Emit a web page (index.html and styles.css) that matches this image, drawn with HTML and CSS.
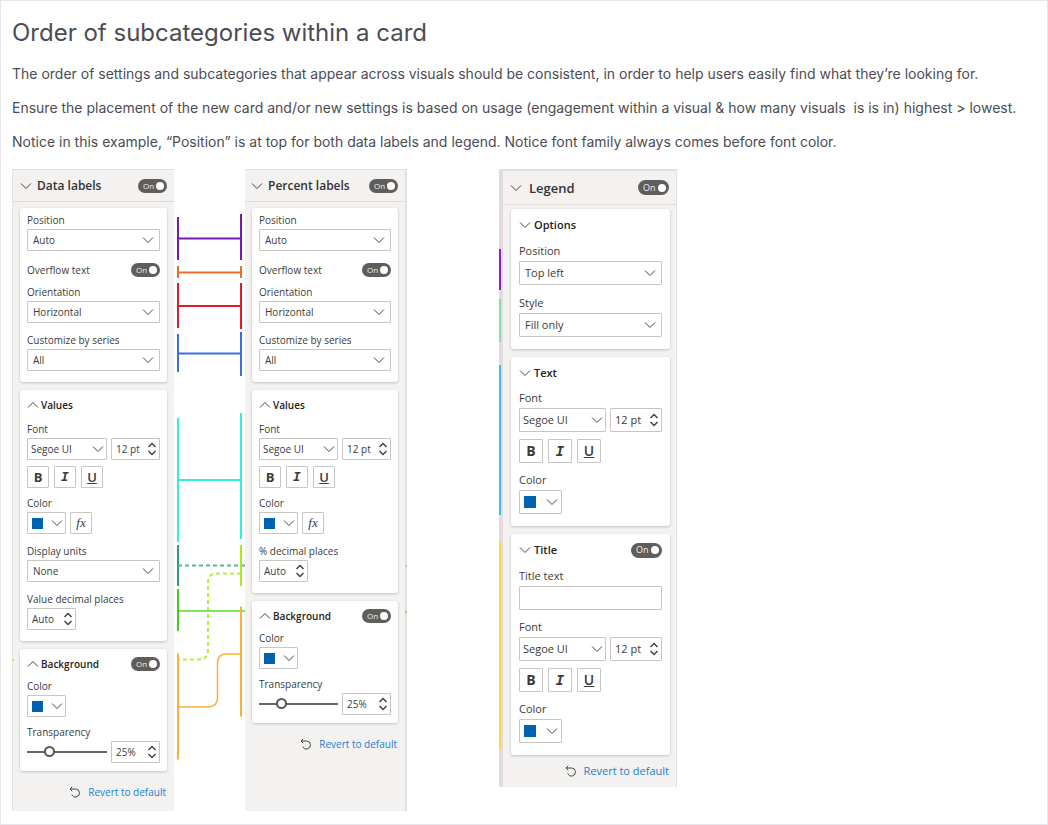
FILE: index.html
```
<!DOCTYPE html>
<html lang="en">
<head>
    <meta charset="UTF-8">
    <meta name="viewport" content="width=device-width, initial-scale=1.0">
    <title>Order of subcategories within a card</title>
    <link rel="stylesheet" href="styles.css">
</head>
<body>
    <!-- shared icons -->
    <svg class="icon-defs" width="0" height="0" aria-hidden="true">
        <symbol id="down" viewBox="0 0 12 12"><path d="M1 3.5 6 8.5 11 3.5" /></symbol>
        <symbol id="up" viewBox="0 0 12 12"><path d="M1 8.5 6 3.5 11 8.5" /></symbol>
        <symbol id="updown" viewBox="0 0 10 14"><path d="M1.5 5 5 1.5 8.5 5M1.5 9 5 12.5 8.5 9" /></symbol>
        <symbol id="revert" viewBox="0 0 12 12"><path d="M3.2.8 1 3l2.2 2.2M1 3h5.5a4 4 0 1 1-3.7 5.5" /></symbol>
    </svg>

    <main class="page">
        <h1>Order of subcategories within a card</h1>
        <p>The order of settings and subcategories that appear across visuals should be consistent, in order to help users easily find what they’re looking for.</p>
        <p>Ensure the placement of the new card and/or new settings is based on usage (engagement within a visual &amp; how many visuals&nbsp; is is in) highest &gt; lowest.</p>
        <p>Notice in this example, “Position” is at top for both data labels and legend. Notice font family always comes before font color.</p>

        <div class="panes">
            <!-- Data labels -->
            <section class="pane pane-data">
                <header class="pane-header">
                    <svg class="chevron"><use href="#down" /></svg>
                    <h2>Data labels</h2>
                    <label class="toggle">On<input type="checkbox" aria-label="Data labels" checked></label>
                </header>
                <div class="pane-body">
                    <div class="card">
                        <div class="field">
                            <label for="d-position">Position</label>
                            <select id="d-position"><option>Auto</option></select>
                        </div>
                        <div class="row spaced">
                            <span class="label">Overflow text</span>
                            <label class="toggle">On<input type="checkbox" aria-label="Overflow text" checked></label>
                        </div>
                        <div class="field tight">
                            <label for="d-orientation">Orientation</label>
                            <select id="d-orientation"><option>Horizontal</option></select>
                        </div>
                        <div class="field">
                            <label for="d-series">Customize by series</label>
                            <select id="d-series"><option>All</option></select>
                        </div>
                    </div>
                    <div class="card titled">
                        <div class="row">
                            <svg class="chevron"><use href="#up" /></svg>
                            <h3>Values</h3>
                        </div>
                        <div class="field">
                            <label for="d-font">Font</label>
                            <div class="controls">
                                <select id="d-font" class="font"><option>Segoe UI</option></select>
                                <div class="spinner"><input type="text" value="12 pt" aria-label="Font size"><svg><use href="#updown" /></svg></div>
                            </div>
                        </div>
                        <div class="format">
                            <button type="button"><b>B</b></button>
                            <button type="button"><i>I</i></button>
                            <button type="button"><u>U</u></button>
                        </div>
                        <div class="field tight">
                            <span class="label">Color</span>
                            <div class="controls">
                                <button type="button" class="color" aria-label="Color"><span class="swatch"></span><svg class="chevron"><use href="#down" /></svg></button>
                                <button type="button" class="fx">fx</button>
                            </div>
                        </div>
                        <div class="field">
                            <label for="d-units">Display units</label>
                            <select id="d-units"><option>None</option></select>
                        </div>
                        <div class="field">
                            <label for="d-decimals">Value decimal places</label>
                            <div class="spinner"><input type="text" id="d-decimals" value="Auto"><svg><use href="#updown" /></svg></div>
                        </div>
                    </div>
                    <div class="card titled short">
                        <div class="row">
                            <svg class="chevron"><use href="#up" /></svg>
                            <h3>Background</h3>
                            <label class="toggle">On<input type="checkbox" aria-label="Background" checked></label>
                        </div>
                        <div class="field tight">
                            <span class="label">Color</span>
                            <button type="button" class="color" aria-label="Background color"><span class="swatch"></span><svg class="chevron"><use href="#down" /></svg></button>
                        </div>
                        <div class="field tight">
                            <label for="d-transparency">Transparency</label>
                            <div class="controls">
                                <input type="range" id="d-transparency" value="25">
                                <div class="spinner"><input type="text" value="25%" aria-label="Transparency percent"><svg><use href="#updown" /></svg></div>
                            </div>
                        </div>
                    </div>
                </div>
                <a class="revert" href="#"><svg><use href="#revert" /></svg>Revert to default</a>
                <span class="mark mark-lime"></span>
            </section>

            <!-- lines between matching settings -->
            <svg class="links" width="71" height="642" viewBox="0 0 71 642" aria-hidden="true">
                <path stroke="#7719aa" d="M4 48v43M67 45v46M4 69.5h63" />
                <path stroke="#e8702a" d="M4 97v12M67 97v12M4 103.5h63" />
                <path stroke="#e01b24" d="M4 114v45M67 114v46M4 137h63" />
                <path stroke="#3b6fe0" d="M4 165v38M67 163v44M4 184.5h63" />
                <path stroke="#2ff0dc" d="M4 249v124M67 244v126M4 311h63" />
                <path stroke="#2f9e74" d="M4 376v41" />
                <path stroke="#5bb59a" stroke-dasharray="4 3" d="M4 396.5h67" />
                <path stroke="#b8ee3a" stroke-dasharray="4 3" d="M67 404.5H43q-9 0-9 9V481q0 9.5-9 9.5H4" />
                <path stroke="#aeea1c" d="M67 376v41" />
                <path stroke="#7be35c" d="M4 442h67" />
                <path stroke="#3fce1f" d="M4 420v42" />
                <path stroke="#fbb03b" d="M4 484.5v106M67 437.5v110" />
                <path stroke="#fbb03b" stroke-width="1.5" d="M4 538h30q9.5 0 9.5-9.5V494q0-9 9-9H67" />
            </svg>

            <!-- Percent labels -->
            <section class="pane pane-percent">
                <header class="pane-header">
                    <svg class="chevron"><use href="#down" /></svg>
                    <h2>Percent labels</h2>
                    <label class="toggle">On<input type="checkbox" aria-label="Percent labels" checked></label>
                </header>
                <div class="pane-body">
                    <div class="card">
                        <div class="field">
                            <label for="p-position">Position</label>
                            <select id="p-position"><option>Auto</option></select>
                        </div>
                        <div class="row spaced">
                            <span class="label">Overflow text</span>
                            <label class="toggle">On<input type="checkbox" aria-label="Overflow text" checked></label>
                        </div>
                        <div class="field tight">
                            <label for="p-orientation">Orientation</label>
                            <select id="p-orientation"><option>Horizontal</option></select>
                        </div>
                        <div class="field">
                            <label for="p-series">Customize by series</label>
                            <select id="p-series"><option>All</option></select>
                        </div>
                    </div>
                    <div class="card titled">
                        <div class="row">
                            <svg class="chevron"><use href="#up" /></svg>
                            <h3>Values</h3>
                        </div>
                        <div class="field">
                            <label for="p-font">Font</label>
                            <div class="controls">
                                <select id="p-font" class="font"><option>Segoe UI</option></select>
                                <div class="spinner"><input type="text" value="12 pt" aria-label="Font size"><svg><use href="#updown" /></svg></div>
                            </div>
                        </div>
                        <div class="format">
                            <button type="button"><b>B</b></button>
                            <button type="button"><i>I</i></button>
                            <button type="button"><u>U</u></button>
                        </div>
                        <div class="field tight">
                            <span class="label">Color</span>
                            <div class="controls">
                                <button type="button" class="color" aria-label="Color"><span class="swatch"></span><svg class="chevron"><use href="#down" /></svg></button>
                                <button type="button" class="fx">fx</button>
                            </div>
                        </div>
                        <div class="field">
                            <label for="p-decimals">% decimal places</label>
                            <div class="spinner"><input type="text" id="p-decimals" value="Auto"><svg><use href="#updown" /></svg></div>
                        </div>
                    </div>
                    <div class="card titled short">
                        <div class="row">
                            <svg class="chevron"><use href="#up" /></svg>
                            <h3>Background</h3>
                            <label class="toggle">On<input type="checkbox" aria-label="Background" checked></label>
                        </div>
                        <div class="field tight">
                            <span class="label">Color</span>
                            <button type="button" class="color" aria-label="Background color"><span class="swatch"></span><svg class="chevron"><use href="#down" /></svg></button>
                        </div>
                        <div class="field tight">
                            <label for="p-transparency">Transparency</label>
                            <div class="controls">
                                <input type="range" id="p-transparency" value="25">
                                <div class="spinner"><input type="text" value="25%" aria-label="Transparency percent"><svg><use href="#updown" /></svg></div>
                            </div>
                        </div>
                    </div>
                </div>
                <a class="revert" href="#"><svg><use href="#revert" /></svg>Revert to default</a>
                <span class="mark mark-teal"></span>
                <span class="mark mark-green"></span>
            </section>

            <!-- Legend -->
            <div class="legend">
                <svg class="rail" width="4" height="618" viewBox="0 0 4 618" aria-hidden="true">
                    <path stroke="#8a1fd1" d="M1 80v41" />
                    <path stroke="#86dcb0" d="M1 130v43" />
                    <path stroke="#35bfe6" d="M1 196v150" />
                    <path stroke="#f5dc3c" d="M1 372v208" />
                </svg>
                <section class="pane pane-large">
                    <header class="pane-header">
                        <svg class="chevron"><use href="#down" /></svg>
                        <h2>Legend</h2>
                        <label class="toggle">On<input type="checkbox" aria-label="Legend" checked></label>
                    </header>
                    <div class="pane-body">
                        <div class="card titled">
                            <div class="row">
                                <svg class="chevron"><use href="#down" /></svg>
                                <h3>Options</h3>
                            </div>
                            <div class="field">
                                <label for="l-position">Position</label>
                                <select id="l-position"><option>Top left</option></select>
                            </div>
                            <div class="field">
                                <label for="l-style">Style</label>
                                <select id="l-style"><option>Fill only</option></select>
                            </div>
                        </div>
                        <div class="card titled">
                            <div class="row">
                                <svg class="chevron"><use href="#down" /></svg>
                                <h3>Text</h3>
                            </div>
                            <div class="field tight">
                                <label for="l-font">Font</label>
                                <div class="controls">
                                    <select id="l-font" class="font"><option>Segoe UI</option></select>
                                    <div class="spinner"><input type="text" value="12 pt" aria-label="Font size"><svg><use href="#updown" /></svg></div>
                                </div>
                            </div>
                            <div class="format">
                                <button type="button"><b>B</b></button>
                                <button type="button"><i>I</i></button>
                                <button type="button"><u>U</u></button>
                            </div>
                            <div class="field tight">
                                <span class="label">Color</span>
                                <button type="button" class="color" aria-label="Text color"><span class="swatch"></span><svg class="chevron"><use href="#down" /></svg></button>
                            </div>
                        </div>
                        <div class="card titled">
                            <div class="row">
                                <svg class="chevron"><use href="#down" /></svg>
                                <h3>Title</h3>
                                <label class="toggle">On<input type="checkbox" aria-label="Title" checked></label>
                            </div>
                            <div class="field">
                                <label for="l-title">Title text</label>
                                <input type="text" id="l-title" class="textbox">
                            </div>
                            <div class="field tight">
                                <label for="l-title-font">Font</label>
                                <div class="controls">
                                    <select id="l-title-font" class="font"><option>Segoe UI</option></select>
                                    <div class="spinner"><input type="text" value="12 pt" aria-label="Title font size"><svg><use href="#updown" /></svg></div>
                                </div>
                            </div>
                            <div class="format">
                                <button type="button"><b>B</b></button>
                                <button type="button"><i>I</i></button>
                                <button type="button"><u>U</u></button>
                            </div>
                            <div class="field tight">
                                <span class="label">Color</span>
                                <button type="button" class="color" aria-label="Title color"><span class="swatch"></span><svg class="chevron"><use href="#down" /></svg></button>
                            </div>
                        </div>
                    </div>
                    <a class="revert" href="#"><svg><use href="#revert" /></svg>Revert to default</a>
                </section>
            </div>
        </div>
    </main>
</body>
</html>
```
FILE: styles.css
```
* {
    box-sizing: border-box;
}
body {
    margin: 0;
    background: white;
    color: #4c4c54;
    font-family: Inter, sans-serif;
}
.icon-defs {
    position: absolute;
}
svg {
    fill: none;
    stroke: #444;
    flex: none;
}
.page {
    min-height: 100vh;
    padding: 15px 11px 12px;
    border: 1px solid #e6e6ec;
}
h1 {
    margin: 0 0 14px;
    font-size: 24px;
    font-weight: 400;
    line-height: 34px;
}
p {
    margin: 0 0 14px;
    font-size: 14px;
    line-height: 20px;
}
.panes {
    display: flex;
    align-items: flex-start;
    margin-top: 17px;
}

/* format pane */
.pane {
    --control: 22px;
    --line: 14px;
    --inset: 7px;
    position: relative;
    display: flex;
    flex-direction: column;
    flex: none;
    align-self: stretch;
    width: 162px;
    background: #f3f2f1;
    border-left: 1px solid #e6e5e4;
    border-top: 1px solid #e0dfde;
    color: #3b3b3b;
    font-family: "Open Sans", "Noto Sans", sans-serif;
    font-size: 10px;
    line-height: var(--line);
}
.pane-percent {
    border-left: none;
    border-right: 2px solid #e1e0df;
}
.pane-header {
    display: flex;
    align-items: center;
    gap: 5px;
    height: 32px;
    padding: 0 7px;
    border-bottom: 1px solid #dddcdb;
}
.pane-percent .pane-header {
    padding-left: 6px;
}
h2, h3 {
    margin: 0;
    font-weight: 600;
    color: #222;
}
h2 {
    font-size: 12px;
    color: #333;
}
h3 {
    font-size: 10px;
}
.chevron {
    width: 12px;
    height: 12px;
}
.pane-body {
    display: flex;
    flex-direction: column;
    gap: 8px;
    padding: 6px 7px 0;
}
.card {
    padding: 5px var(--inset) 11px;
    background: white;
    border-radius: 3px;
    box-shadow: 0 1px 3px rgba(0,0,0,0.2);
}
.card.titled {
    padding-top: 8px;
}
.card.short {
    padding-bottom: 8px;
}
.row {
    display: flex;
    align-items: center;
    gap: 2px;
    height: var(--line);
}
.spaced {
    margin-top: 12px;
}
.toggle {
    display: flex;
    align-items: center;
    justify-content: space-between;
    width: 29px;
    height: 14px;
    margin-left: auto;
    padding: 0 3px 0 5px;
    background: #605e5c;
    border-radius: 7px;
    color: #eee;
    font-size: 8px;
}
.toggle input {
    appearance: none;
    width: 8px;
    height: 8px;
    margin: 0;
    background: white;
    border-radius: 50%;
}
.field {
    display: flex;
    flex-direction: column;
    align-items: flex-start;
    gap: 2px;
    margin-top: 10px;
}
.field:first-child {
    margin-top: 0;
}
.field.tight {
    margin-top: 8px;
}
.controls {
    display: flex;
    gap: 4px;
    width: 100%;
}
select, .textbox, .spinner, button {
    height: var(--control);
    background: white;
    border: 1px solid #c8c6c4;
    border-radius: 1px;
    color: inherit;
    font: inherit;
}
select {
    appearance: none;
    width: 100%;
    padding: 0 5px;
    background: white url("data:image/svg+xml,%3Csvg xmlns='http://www.w3.org/2000/svg' width='12' height='12' fill='none' stroke='%23444'%3E%3Cpath d='M1 3.5 6 8.5 11 3.5'/%3E%3C/svg%3E") no-repeat right 5px center;
}
.font {
    flex: 1;
    min-width: 0;
    padding: 0 3px;
    background-position: right 2px center;
}
.textbox {
    width: 100%;
}
.spinner {
    display: flex;
    align-items: center;
    width: 49px;
    padding: 0 2px 0 4px;
}
.spinner input {
    flex: 1;
    min-width: 0;
    padding: 0;
    border: none;
    color: inherit;
    font: inherit;
}
.spinner svg {
    width: 10px;
    height: 14px;
    stroke-width: 1.5;
}
.format {
    display: flex;
    gap: 5px;
    margin-top: 6px;
}
button {
    display: flex;
    align-items: center;
    justify-content: center;
    width: var(--control);
    padding: 0;
}
.format button {
    font-size: 13px;
}
.format u {
    font-weight: 600;
}
.format i {
    font-family: "DejaVu Sans Mono", monospace;
    font-weight: 700;
}
.color {
    justify-content: space-between;
    width: 39px;
    padding: 0 2px 0 4px;
}
.swatch {
    width: 11px;
    height: 11px;
    background: #0063b1;
}
.fx {
    font-family: "Liberation Serif", serif;
    font-size: 13px;
    font-style: italic;
}
input[type="range"] {
    appearance: none;
    flex: 1;
    min-width: 0;
    height: var(--control);
    margin: 0;
    background: none;
}
input[type="range"]::-webkit-slider-runnable-track {
    height: 2px;
    background: #666;
}
input[type="range"]::-webkit-slider-thumb {
    appearance: none;
    width: 11px;
    height: 11px;
    margin-top: -5px;
    background: white;
    border: 2px solid #555;
    border-radius: 50%;
}
.revert {
    display: flex;
    align-items: center;
    justify-content: flex-end;
    gap: 7px;
    padding: 14px 8px 12px;
    color: #1a80d0;
    text-decoration: none;
}
.revert svg {
    width: 12px;
    height: 12px;
}

/* connector lines */
.links {
    stroke-width: 2;
}
.mark {
    position: absolute;
    width: 2px;
    height: 2px;
}
.mark-lime {
    left: -1px;
    top: 489px;
    background: #b8ee3a;
}
.mark-teal {
    right: -2px;
    top: 395px;
    background: #a4d8c8;
}
.mark-green {
    right: -2px;
    top: 441px;
    background: #7be35c;
}

/* legend pane is drawn a little larger than the other two */
.legend {
    display: flex;
    margin-left: 92px;
}
.rail {
    background: #e6dae1;
    stroke-width: 2;
}
.pane-large {
    --control: 24px;
    --line: 16px;
    --inset: 8px;
    width: 174px;
    border-left: none;
    border-top: 2px solid #e3dade;
    border-right: 1px solid #e1e0df;
    font-size: 11px;
}
.pane-large .pane-header {
    height: 34px;
    gap: 7px;
}
.pane-large .pane-body {
    padding: 4px 6px 0 8px;
}
.pane-large h2 {
    font-size: 13px;
}
.pane-large h3 {
    font-size: 11px;
}
.pane-large .card {
    padding-bottom: 12px;
}
.pane-large .toggle {
    width: 31px;
    height: 15px;
    border-radius: 8px;
    font-size: 9px;
}
.pane-large .row {
    gap: 3px;
}
.pane-large .field.tight {
    margin-top: 9px;
}
.pane-large .format {
    margin-top: 7px;
}
.pane-large .format button {
    font-size: 14px;
}
.pane-large .spinner {
    width: 52px;
}
.pane-large .color {
    width: 43px;
    padding: 0 3px 0 4px;
}
.pane-large .swatch {
    width: 12px;
    height: 12px;
}
.pane-large .revert {
    padding: 8px 7px 8px;
}
```
